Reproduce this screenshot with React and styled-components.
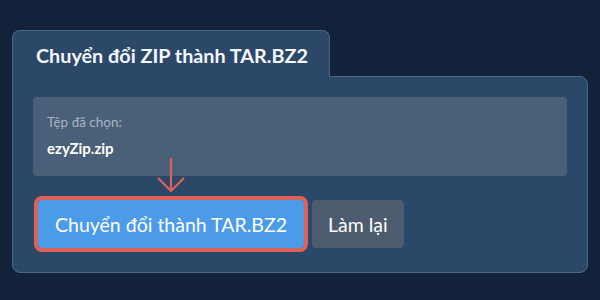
import React from "react";
import styled, { createGlobalStyle } from "styled-components";

const GlobalStyle = createGlobalStyle`
  html, body {
    margin: 0;
    padding: 0;
    background: #11223a;
    font-family: Lato, "Noto Sans", sans-serif;
  }
`;

const Page = styled.div`
  width: 600px;
  height: 300px;
  box-sizing: border-box;
  padding: 30px 12px 0 12px;
`;

const Tab = styled.div`
  display: inline-block;
  box-sizing: border-box;
  width: 318px;
  height: 47px;
  padding: 12px 0 0 23px;
  background: #2c4869;
  border: 1px solid #4b6586;
  border-bottom: none;
  border-radius: 8px 8px 0 0;
  color: #f4f7fb;
  font-size: 19.8px;
  font-weight: 700;
  line-height: 24px;
  position: relative;
  z-index: 1;
  margin-bottom: -1px;
`;

const Panel = styled.div`
  box-sizing: border-box;
  height: 197px;
  padding: 20px 20px 0 20px;
  background: #2c4869;
  border: 1px solid #4b6586;
  border-radius: 0 8px 8px 8px;
`;

const FileBox = styled.div`
  box-sizing: border-box;
  height: 79px;
  padding: 17px 14px 0 14px;
  background: #4a5f78;
  border-radius: 4px;
`;

const Label = styled.div`
  color: #a7b4c4;
  font-size: 13.5px;
  line-height: 16px;
`;

const FileName = styled.div`
  margin-top: 9px;
  color: #ffffff;
  font-size: 15px;
  font-weight: 700;
  line-height: 18px;
`;

const Actions = styled.div`
  display: flex;
  align-items: center;
  gap: 8px;
  margin-top: 24px;
  padding-left: 5px;
`;

const Button = styled.button`
  position: relative;
  height: 48px;
  padding: 0 ${(p) => (p.$primary ? "17px" : "16px")};
  border: none;
  border-radius: 4px;
  background: ${(p) => (p.$primary ? "#4c9be8" : "#4d5c6e")};
  color: #ffffff;
  font-family: Lato, "Noto Sans", sans-serif;
  font-size: 19.5px;
  outline: ${(p) => (p.$primary ? "4px solid #e0605a" : "none")};
  outline-offset: 0;
`;

const Pointer = styled.svg`
  position: absolute;
  left: 119px;
  top: -42px;
`;

export default function App() {
  return (
    <>
      <GlobalStyle />
      <Page>
        <Tab>Chuyển đổi ZIP thành TAR.BZ2</Tab>
        <Panel>
          <FileBox>
            <Label>Tệp đã chọn:</Label>
            <FileName>ezyZip.zip</FileName>
          </FileBox>
          <Actions>
            <Button $primary>
              Chuyển đổi thành TAR.BZ2
              <Pointer width="28" height="36" viewBox="0 0 28 36">
                <path
                  d="M14 0 V33 M1 20 L14 33 L27 20"
                  fill="none"
                  stroke="#e0605a"
                  strokeWidth="2.2"
                />
              </Pointer>
            </Button>
            <Button>Làm lại</Button>
          </Actions>
        </Panel>
      </Page>
    </>
  );
}
